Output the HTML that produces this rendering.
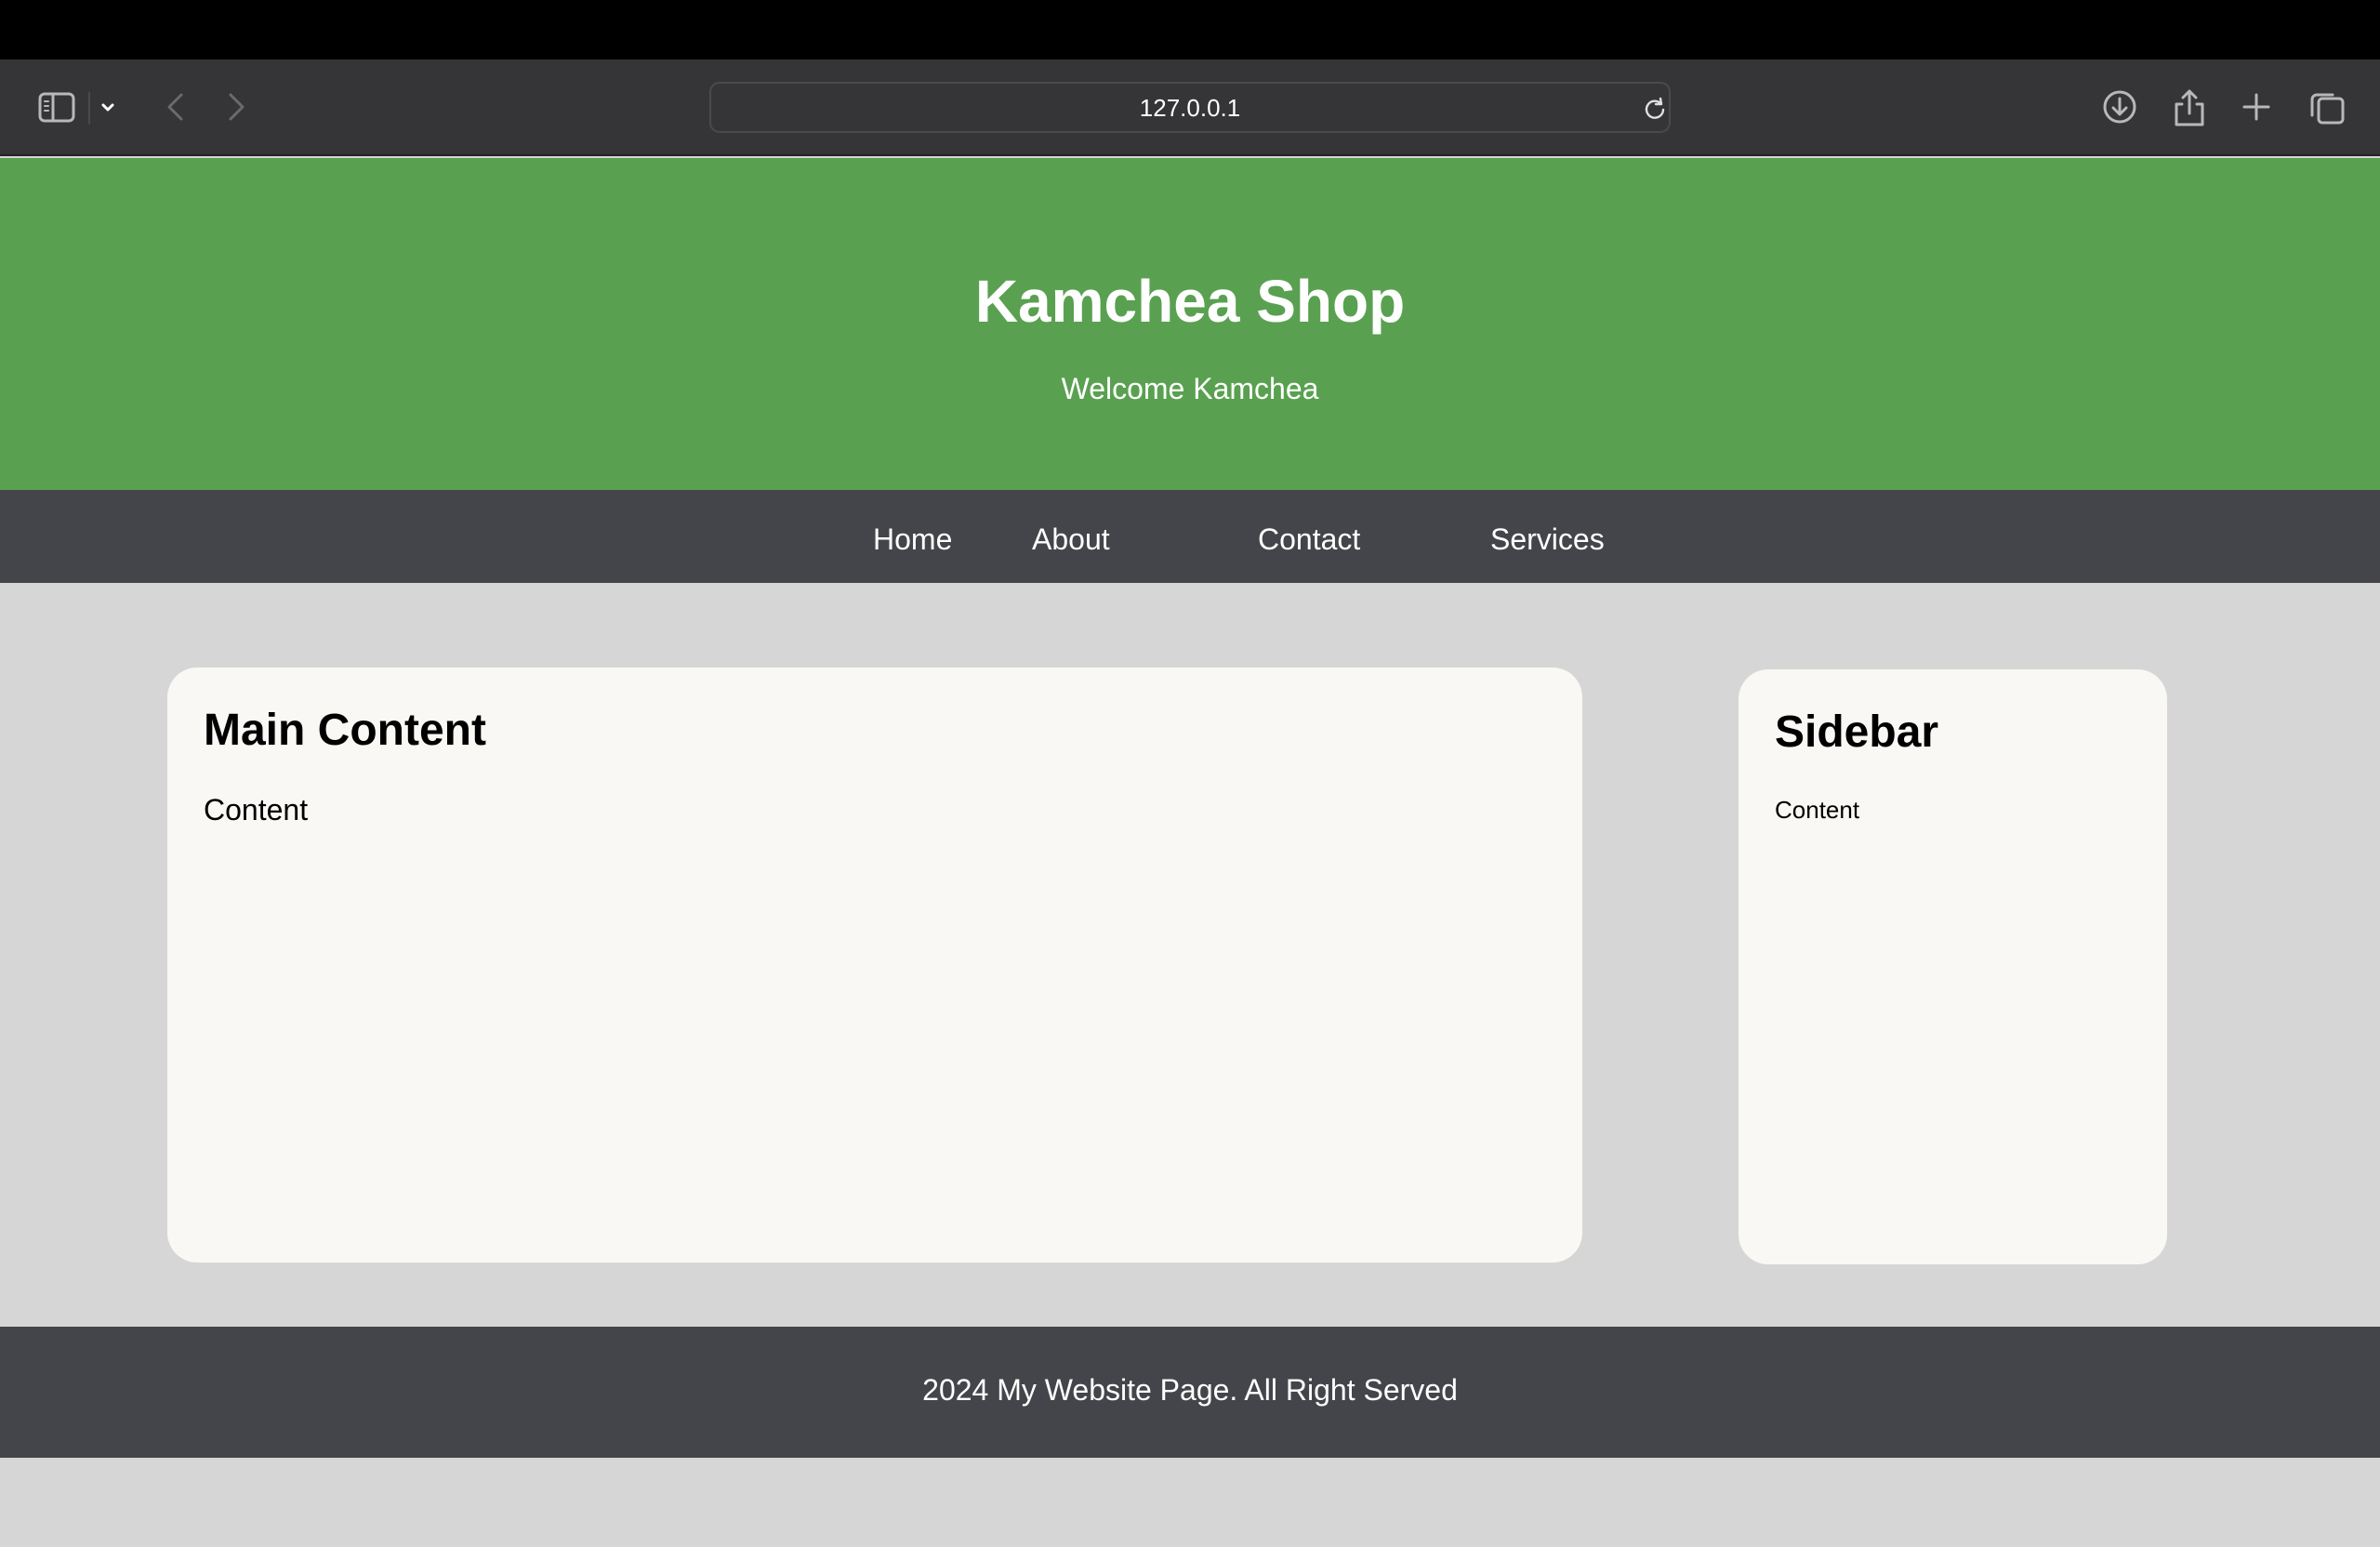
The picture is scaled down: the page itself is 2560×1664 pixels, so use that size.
<!DOCTYPE html>
<html><head><meta charset="utf-8"><style>
*{margin:0;padding:0;box-sizing:border-box}
body{width:2560px;height:1664px;background:#d6d6d6;font-family:"Liberation Sans",Arial,sans-serif;position:relative;overflow:hidden}
.abs{position:absolute}
#top{left:0;top:0;width:2560px;height:64px;background:#000}
#tb{left:0;top:64px;width:2560px;height:104px;background:#353537;border-bottom:2px solid #242426}
#url{left:763px;top:88px;width:1034px;height:55px;border:2px solid #4a4a4c;border-radius:11px;background:#353537;color:#fff;font-size:26px;text-align:center;line-height:53px}
#hdr{left:0;top:170px;width:2560px;height:357px;background:#59a150;color:#fff;text-align:center}
#hdr h1{position:absolute;top:117px;width:100%;font-size:64px;font-weight:bold}
#hdr p{position:absolute;top:230px;width:100%;font-size:32px}
#nav{left:0;top:527px;width:2560px;height:100px;background:#44454a;color:#fff;font-size:32px}
#nav span{position:absolute;top:35px}
.card{background:#f9f8f4;border-radius:32px}
#main{left:180px;top:718px;width:1522px;height:640px}
#side{left:1870px;top:720px;width:461px;height:640px}
.card h2{position:absolute;font-size:48px;font-weight:bold;color:#000}
#foot{left:0;top:1427px;width:2560px;height:141px;background:#44454a;color:#fff;font-size:32px;text-align:center;line-height:136px}
</style></head><body>
<div id="top" class="abs"></div>
<div id="tb" class="abs">
<svg width="2560" height="104" style="position:absolute;left:0;top:0" fill="none" stroke="#b8b8b8" stroke-width="3" stroke-linecap="round" stroke-linejoin="round">
<rect x="43" y="37" width="36" height="29" rx="5"/><line x1="57" y1="37" x2="57" y2="66"/>
<line x1="48" y1="45" x2="52" y2="45" stroke-width="2"/><line x1="48" y1="50" x2="52" y2="50" stroke-width="2"/><line x1="48" y1="55" x2="52" y2="55" stroke-width="2"/>
<line x1="96" y1="36" x2="96" y2="69" stroke="#4a4a4c" stroke-width="2"/>
<path d="M111 49l5 5 5-5" stroke="#fff"/>
<path d="M195 38l-13 13 13 13" stroke="#6a6a6c"/>
<path d="M248 38l13 13-13 13" stroke="#6a6a6c"/>
<circle cx="2280" cy="51" r="16"/><path d="M2280 42v16M2273 52l7 7 7-7"/>
<path d="M2347 48h-6v22h28v-22h-6M2355 34v24M2348 41l7-7 7 7"/>
<path d="M2427 38v26M2414 51h26"/>
<rect x="2494" y="42" width="26" height="26" rx="4"/><path d="M2487 60v-17a5 5 0 0 1 5-5h17"/>
</svg>
</div>
<div id="url" class="abs">127.0.0.1
<svg width="30" height="30" style="position:absolute;left:1001px;top:12px" fill="none" stroke="#e0e0e0" stroke-width="2.4" stroke-linecap="round" stroke-linejoin="round"><path d="M21 10a9 9 0 1 0 2 6M20 4l1 6-6 0"/></svg>
</div>
<div id="hdr" class="abs"><h1>Kamchea Shop</h1><p>Welcome Kamchea</p></div>
<div id="nav" class="abs"><span style="left:939px">Home</span><span style="left:1110px">About</span><span style="left:1353px">Contact</span><span style="left:1603px">Services</span></div>
<div id="main" class="abs card"><h2 style="left:39px;top:40px">Main Content</h2><div class="abs" style="left:39px;top:135px;font-size:32px">Content</div></div>
<div id="side" class="abs card"><h2 style="left:39px;top:40px">Sidebar</h2><div class="abs" style="left:39px;top:136px;font-size:26px">Content</div></div>
<div id="foot" class="abs">2024 My Website Page. All Right Served</div>
</body></html>
